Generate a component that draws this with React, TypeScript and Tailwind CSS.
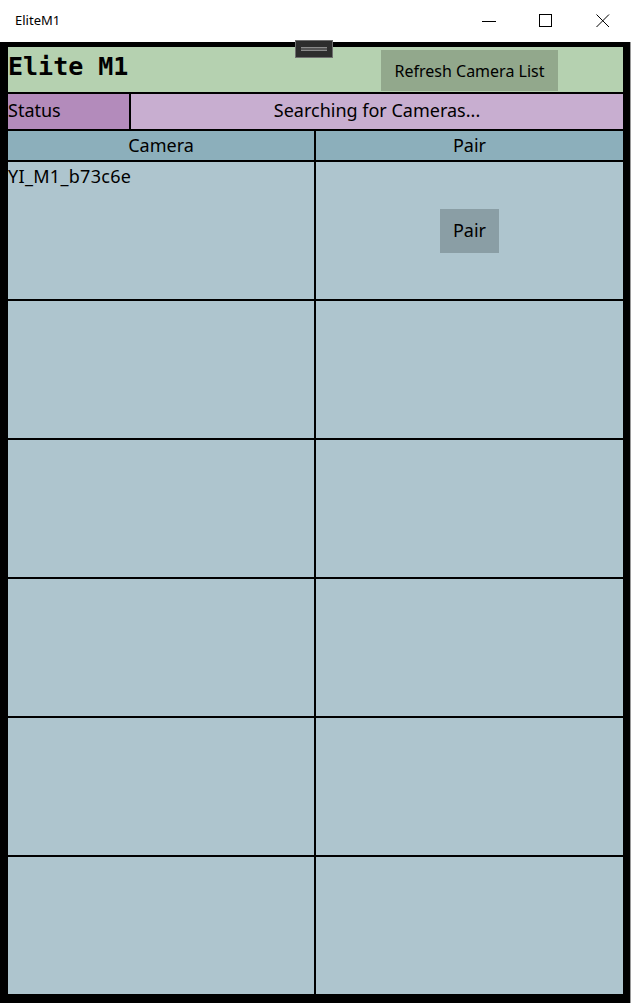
import React from "react";

const ui = { fontFamily: '"Noto Sans", "Open Sans", sans-serif' };

function TitleBar() {
  return (
    <div className="h-[42px] bg-white flex items-center shrink-0" style={ui}>
      <span className="ml-[15px] text-[13px] text-black">EliteM1</span>
      <div className="ml-auto flex items-center h-full">
        <div className="w-[58px] h-full flex items-center justify-center">
          <svg width="14" height="14" viewBox="0 0 14 14">
            <path d="M0 7.5H14" stroke="#000" strokeWidth="1" />
          </svg>
        </div>
        <div className="w-[56px] h-full flex items-center justify-center">
          <svg width="14" height="14" viewBox="0 0 14 14">
            <rect x="0.5" y="0.5" width="12" height="12" fill="none" stroke="#000" strokeWidth="1" />
          </svg>
        </div>
        <div className="w-[58px] h-full flex items-center justify-center">
          <svg width="14" height="14" viewBox="0 0 14 14">
            <path d="M0.5 0.5L13 13M13 0.5L0.5 13" stroke="#000" strokeWidth="1" />
          </svg>
        </div>
      </div>
    </div>
  );
}

export default function App() {
  const rows = ["YI_M1_b73c6e", "", "", "", "", ""];
  return (
    <div className="w-[632px] h-[1003px] flex flex-col bg-white relative overflow-hidden" style={ui}>
      <TitleBar />
      <div className="flex-1 flex w-[631px] border-r border-[#9a9a9a]">
        <div className="flex-1 bg-black pl-[8px] pr-[7px] pt-[5px] pb-[9px] flex flex-col gap-[2px]">
          <div className="h-[45px] bg-[#b5d1b0] flex items-start shrink-0">
            <span
              className="text-[25px] font-bold text-black leading-none mt-[7px]"
              style={{ fontFamily: '"DejaVu Sans Mono", "Liberation Mono", monospace' }}
            >
              Elite M1
            </span>
            <button className="ml-auto mr-[65px] mt-[3px] w-[177px] h-[41px] bg-[#92a88c] text-[16px] text-black">
              Refresh Camera List
            </button>
          </div>
          <div className="h-[35px] flex gap-[2px] shrink-0 text-[18px] text-black">
            <div className="w-[121px] bg-[#b38bbb] flex items-center pb-[3px]">Status</div>
            <div className="flex-1 bg-[#c8aed0] flex items-center justify-center pb-[3px]">Searching for Cameras...</div>
          </div>
          <div className="h-[29px] grid grid-cols-[306px_1fr] gap-[2px] shrink-0 text-[18px] text-black">
            <div className="bg-[#8cafbb] flex items-center justify-center">Camera</div>
            <div className="bg-[#8cafbb] flex items-center justify-center">Pair</div>
          </div>
          {rows.map((name, i) => (
            <div key={i} className="flex-1 grid grid-cols-[306px_1fr] gap-[2px] text-[18px] text-black">
              <div className="bg-[#aec5ce] pt-[3px] leading-tight tracking-[0.3px]">{name}</div>
              <div className="bg-[#aec5ce] flex items-center justify-center">
                {name && (
                  <button className="w-[59px] h-[44px] bg-[#8a9ea5] text-[18px] text-black">Pair</button>
                )}
              </div>
            </div>
          ))}
        </div>
      </div>
      <div className="absolute left-[295px] top-[40px] w-[38px] h-[18px] bg-[#2d2d2d] border border-[#6f6f6f] flex items-center justify-center">
        <div className="w-[26px] h-[4px] border-y border-[#8a8a8a] bg-[#555]" />
      </div>
    </div>
  );
}
